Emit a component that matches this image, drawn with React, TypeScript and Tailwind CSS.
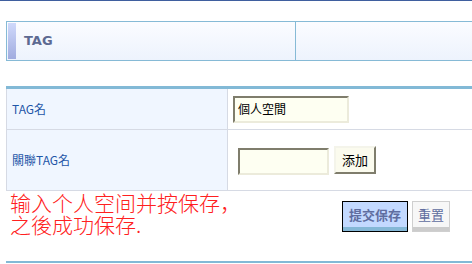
const FONT = { fontFamily: '"DejaVu Sans", "Noto Sans CJK TC", sans-serif' } as const;
const CJK = { fontFamily: '"Noto Sans CJK TC", "Noto Sans CJK SC", sans-serif' } as const;

export default function App() {
  return (
    <div className="relative h-[264px] w-[472px] overflow-hidden bg-white" style={FONT}>
      <div className="h-px w-full bg-[#3f5f9f]" />

      {/* 標題欄 */}
      <div className="ml-[6px] mt-[20px] flex h-[40px] w-[500px] border border-[#86bad6] bg-gradient-to-b from-[#fbfcff] to-[#edf3fd]">
        <div className="my-px ml-px w-[8px] bg-gradient-to-b from-[#cfd9fb] to-[#a1acdf]" />
        <div className="flex w-[280px] items-center border-r border-[#86bad6] pl-[8px] text-[13px] font-bold text-[#5d6a92]">TAG</div>
        <div className="flex-1" />
      </div>

      {/* 表單 */}
      <div className="ml-[6px] mt-[25px] w-[500px] border-t-[3px] border-[#82b9d6]">
        <div className="flex h-[41px] border-b border-l border-[#d6dae4]">
          <div className="flex w-[221px] items-center border-r border-[#d6dae4] bg-[#f0f6ff] pl-[5px] text-[12px] text-[#1f57a8]" style={CJK}>
            TAG名
          </div>
          <div className="flex items-center pl-[5px]">
            <div
              className="flex h-[27px] w-[116px] items-center border-2 border-t-[#7f7d6c] border-l-[#7f7d6c] border-b-[#ecebdb] border-r-[#ecebdb] bg-[#fefff2] pl-[3px] text-[12px] text-black"
              style={CJK}
            >
              個人空間
            </div>
          </div>
        </div>
        <div className="flex h-[61px] border-b border-l border-[#d6dae4]">
          <div className="flex w-[221px] items-center border-r border-[#d6dae4] bg-[#f0f6ff] pl-[5px] text-[12px] text-[#1f57a8]" style={CJK}>
            關聯TAG名
          </div>
          <div className="flex items-center gap-[5px] pt-[2px] pl-[10px]">
            <div className="h-[27px] w-[91px] border-2 border-t-[#7f7d6c] border-l-[#7f7d6c] border-b-[#ecebdb] border-r-[#ecebdb] bg-[#fefff2]" />
            <div
              className="-mt-[3px] flex h-[28px] w-[42px] items-center justify-center border-2 border-t-[#f4f4ea] border-l-[#f4f4ea] border-b-[#7f7d6c] border-r-[#7f7d6c] bg-[#fbfbee] text-[13px] text-black"
              style={CJK}
            >
              添加
            </div>
          </div>
        </div>
        <div className="flex h-[70px]">
          <div className="w-[330px] pl-[4px] text-[21px] leading-[22px] text-[#ff2020]" style={{ fontFamily: '"Noto Sans CJK SC", sans-serif', fontWeight: 300 }}>
            输入个人空间并按保存，
            <br />
            之後成功保存.
          </div>
          <div className="ml-[6px] mt-[10px] flex h-[31px] gap-[4px]">
            <div className="flex w-[66px] flex-col border border-black bg-[#c3d9ff]">
              <div className="flex flex-1 items-center justify-center text-[13px] font-bold text-[#5f6d9f]" style={CJK}>
                提交保存
              </div>
              <div className="h-[4px] bg-[#84b7d6]" />
            </div>
            <div className="flex w-[38px] flex-col border border-[#cfcfcf] bg-[#f7f7f7]">
              <div className="flex flex-1 items-center justify-center text-[13px] text-[#5f6d9f]" style={CJK}>
                重置
              </div>
              <div className="h-[4px] bg-[#cccccc]" />
            </div>
          </div>
        </div>
        <div className="h-[2px] bg-[#82b9d6]" />
      </div>
    </div>
  );
}
